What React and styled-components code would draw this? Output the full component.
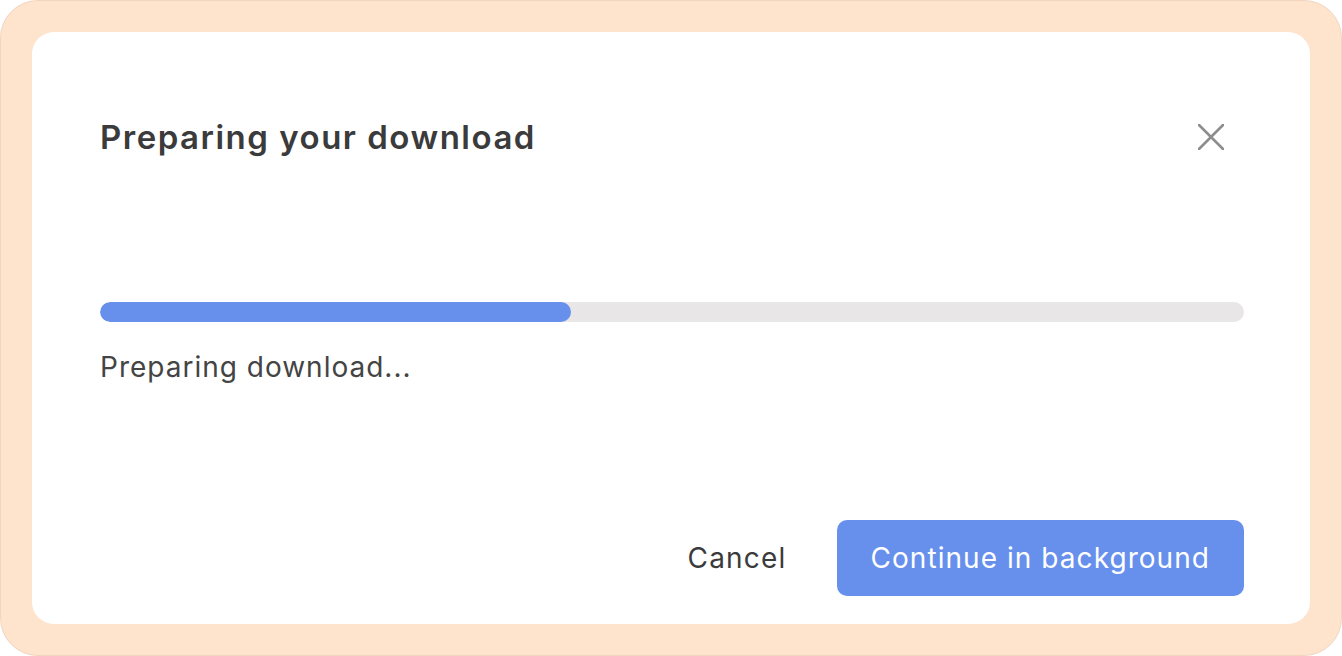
import React from "react";
import styled, { createGlobalStyle } from "styled-components";

const Global = createGlobalStyle`
  html, body { margin: 0; padding: 0; background: #ffffff; }
  body { font-family: Inter, "Noto Sans", "Liberation Sans", sans-serif; }
  * { box-sizing: border-box; }
`;

const Frame = styled.div`
  width: 1342px;
  height: 656px;
  padding: 31px;
  background: #fee3cd;
  border: 1px solid #f0d5bf;
  border-radius: 38px;
`;

const Card = styled.section`
  height: 100%;
  background: #ffffff;
  border-radius: 22px;
  padding: 85px 66px 28px 68px;
  display: flex;
  flex-direction: column;
`;

const Header = styled.header`
  display: flex;
  align-items: center;
  justify-content: space-between;
  height: 40px;
`;

const Title = styled.h2`
  margin: 0;
  font-size: 33px;
  line-height: 40px;
  font-weight: 600;
  color: #3b3b3b;
  letter-spacing: 1.5px;
`;

const CloseButton = styled.button`
  width: 44px;
  height: 44px;
  margin-right: 11px;
  border: none;
  background: transparent;
  padding: 0;
  display: flex;
  align-items: center;
  justify-content: center;
  color: #8d8d8d;
  cursor: pointer;
`;

const Track = styled.div`
  margin-top: 145px;
  height: 20px;
  border-radius: 10px;
  background: #e8e6e6;
  overflow: hidden;
`;

const Fill = styled.div`
  height: 100%;
  border-radius: 10px;
  background: #6690ec;
`;

const Status = styled.p`
  margin: 27px 0 0;
  font-size: 28px;
  line-height: 36px;
  letter-spacing: 1px;
  color: #444444;
`;

const Footer = styled.footer`
  margin-top: auto;
  display: flex;
  justify-content: flex-end;
  align-items: center;
  gap: 50px;
`;

const TextButton = styled.button`
  border: none;
  background: transparent;
  padding: 0;
  font-family: inherit;
  font-size: 28px;
  letter-spacing: 1.2px;
  color: #3b3b3b;
  cursor: pointer;
`;

const PrimaryButton = styled.button`
  height: 76px;
  padding: 0 34px;
  border: none;
  border-radius: 10px;
  background: #6690ec;
  color: #ffffff;
  font-family: inherit;
  font-size: 28px;
  letter-spacing: 1.05px;
  cursor: pointer;
`;

export default function App() {
  const progress = 41.2;
  return (
    <>
      <Global />
      <Frame>
        <Card>
          <Header>
            <Title>Preparing your download</Title>
            <CloseButton aria-label="Close">
              <svg width="26" height="26" viewBox="0 0 26 26" fill="none">
                <path d="M1 1 L25 25 M25 1 L1 25" stroke="currentColor" strokeWidth="2.6" strokeLinecap="round" />
              </svg>
            </CloseButton>
          </Header>
          <Track>
            <Fill style={{ width: `${progress}%` }} />
          </Track>
          <Status>Preparing download...</Status>
          <Footer>
            <TextButton>Cancel</TextButton>
            <PrimaryButton>Continue in background</PrimaryButton>
          </Footer>
        </Card>
      </Frame>
    </>
  );
}
